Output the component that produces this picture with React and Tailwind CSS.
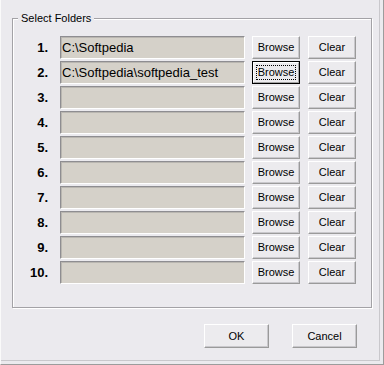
import { useState } from "react";

const folders = [
  "C:\\Softpedia",
  "C:\\Softpedia\\softpedia_test",
  "",
  "",
  "",
  "",
  "",
  "",
  "",
  "",
];

const ui = "font-['Liberation_Sans',Arial,sans-serif]";

// classic raised button
const Btn = ({ children, focused, className = "" }) => {
  if (focused) {
    return (
      <button
        className={`${ui} flex h-[23px] w-[48px] border border-black bg-[#ecebee] p-0 text-[11px] text-black ${className}`}
      >
        <span className="flex h-full w-full border border-t-white border-l-white border-r-[#a6a6a6] border-b-[#a6a6a6] p-[2px]">
          <span className="flex h-full w-full items-center justify-center border border-dotted border-black leading-none">
            {children}
          </span>
        </span>
      </button>
    );
  }
  return (
    <button
      className={`${ui} flex h-[23px] w-[48px] items-center justify-center border border-t-white border-l-white border-r-[#9a9a9a] border-b-[#9a9a9a] bg-[#ecebee] p-0 text-[11px] leading-none text-black shadow-[inset_-1px_-1px_0_#c9c8cc] ${className}`}
    >
      {children}
    </button>
  );
};

const App = () => {
  const [paths] = useState(folders);

  return (
    <div className="flex h-[365px] w-[384px] border-r border-b border-r-[#9c9c9c] border-b-[#9c9c9c] border-l border-l-[#fafafa] bg-[#ebeaee]">
      <div className="mr-[3px] mb-[3px] flex flex-1 flex-col border-r border-b border-r-[#c9c8cc] border-b-[#c9c8cc] pt-[12px] pl-[11px]">
        <fieldset className="w-[360px] border border-[#a3a2a6] p-0 shadow-[inset_1px_1px_0_#ffffff,1px_1px_0_#ffffff]">
          <legend className={`${ui} ml-[5px] bg-[#ebeaee] px-[3px] text-[11px] leading-[13px] text-black`}>
            Select Folders
          </legend>
          <div className="flex flex-col gap-[2px] pt-[11px] pb-[23px]">
            {paths.map((p, i) => (
              <div key={i} className="flex h-[23px] items-center">
                <span className="w-[35px] text-right font-['Liberation_Sans',Arial,sans-serif] text-[13px] font-bold leading-none text-black">
                  {i + 1}.
                </span>
                <div className="ml-[12px] flex h-[23px] w-[185px] items-center border border-t-[#8e8d91] border-l-[#8e8d91] border-r-white border-b-white bg-[#d5d1c9] pl-[1px] shadow-[inset_1px_1px_0_#b9b6b0]">
                  <span className={`${ui} text-[13px] leading-none text-black`}>{p}</span>
                </div>
                <Btn focused={i === 1} className="ml-[7px]">Browse</Btn>
                <Btn className="ml-[8px]">Clear</Btn>
              </div>
            ))}
          </div>
        </fieldset>
        <div className="mt-[16px] flex justify-end gap-[23px] pr-[22px]">
          <Btn className="h-[24px] w-[65px]">OK</Btn>
          <Btn className="h-[24px] w-[65px]">Cancel</Btn>
        </div>
      </div>
    </div>
  );
};

export default App;
